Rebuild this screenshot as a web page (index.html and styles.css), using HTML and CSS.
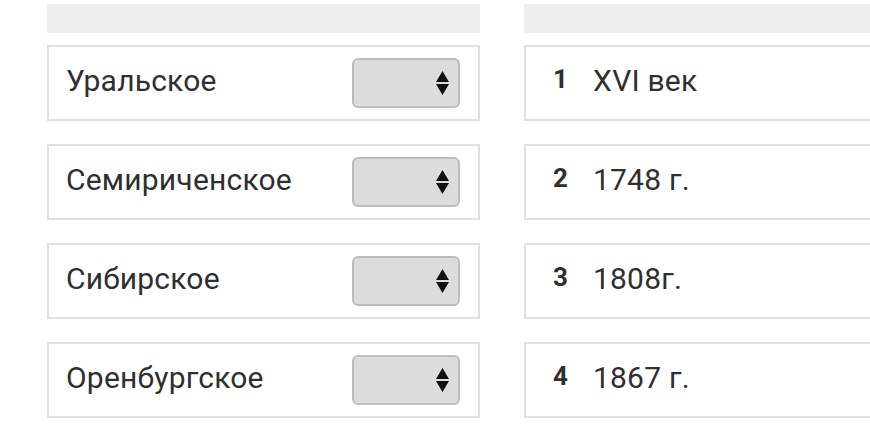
FILE: index.html
```html
<!DOCTYPE html>
<html>
<head>
  <meta charset="UTF-8">
  <title>Сопоставление</title>
  <link rel="stylesheet" href="styles.css">
</head>
<body>
  <div class="board">
    <div class="column left-column">
      <div class="column-head"></div>
      <div class="card">
        <span class="label">Уральское</span>
        <div class="picker">
          <svg width="13" height="24" viewBox="0 0 13 24"><path d="M6.5 0 L13 11 L0 11 Z M0 13 L13 13 L6.5 24 Z" fill="#111"/></svg>
        </div>
      </div>
      <div class="card">
        <span class="label">Семириченское</span>
        <div class="picker">
          <svg width="13" height="24" viewBox="0 0 13 24"><path d="M6.5 0 L13 11 L0 11 Z M0 13 L13 13 L6.5 24 Z" fill="#111"/></svg>
        </div>
      </div>
      <div class="card">
        <span class="label">Сибирское</span>
        <div class="picker">
          <svg width="13" height="24" viewBox="0 0 13 24"><path d="M6.5 0 L13 11 L0 11 Z M0 13 L13 13 L6.5 24 Z" fill="#111"/></svg>
        </div>
      </div>
      <div class="card">
        <span class="label">Оренбургское</span>
        <div class="picker">
          <svg width="13" height="24" viewBox="0 0 13 24"><path d="M6.5 0 L13 11 L0 11 Z M0 13 L13 13 L6.5 24 Z" fill="#111"/></svg>
        </div>
      </div>
    </div>

    <div class="column right-column">
      <div class="column-head"></div>
      <div class="card">
        <span class="num">1</span>
        <span class="label">XVI век</span>
      </div>
      <div class="card">
        <span class="num">2</span>
        <span class="label">1748 г.</span>
      </div>
      <div class="card">
        <span class="num">3</span>
        <span class="label">1808г.</span>
      </div>
      <div class="card">
        <span class="num">4</span>
        <span class="label">1867 г.</span>
      </div>
    </div>
  </div>
</body>
</html>
```

FILE: styles.css
```css
body {
  margin: 0;
  background: #fff;
  font-family: Roboto, "Liberation Sans", sans-serif;
  color: #2f2f2f;
  overflow: hidden;
}
.board {
  display: flex;
  gap: 44px;
  padding: 4px 0 0 47px;
}
.column {
  flex: 0 0 433px;
  display: flex;
  flex-direction: column;
  gap: 23px;
}
.column-head {
  height: 29px;
  background: #eeeeee;
  margin-bottom: -11px;
}
.card {
  height: 76px;
  box-sizing: border-box;
  border: 2px solid #e0e0e0;
  display: flex;
  align-items: center;
  padding: 0 18px 0 17px;
}
.left-column .card {
  justify-content: space-between;
}
.label {
  font-size: 30px;
  letter-spacing: 0.2px;
  margin-bottom: 5px;
}
.picker {
  width: 108px;
  height: 50px;
  box-sizing: border-box;
  background: #dcdcdc;
  border: 2px solid #bdbdbd;
  border-radius: 6px;
  display: flex;
  align-items: center;
  justify-content: flex-end;
  padding-right: 9px;
}
.right-column .card {
  padding-left: 27px;
}
.num {
  font-size: 26px;
  font-weight: bold;
  width: 40px;
  margin-bottom: 9px;
}
```
